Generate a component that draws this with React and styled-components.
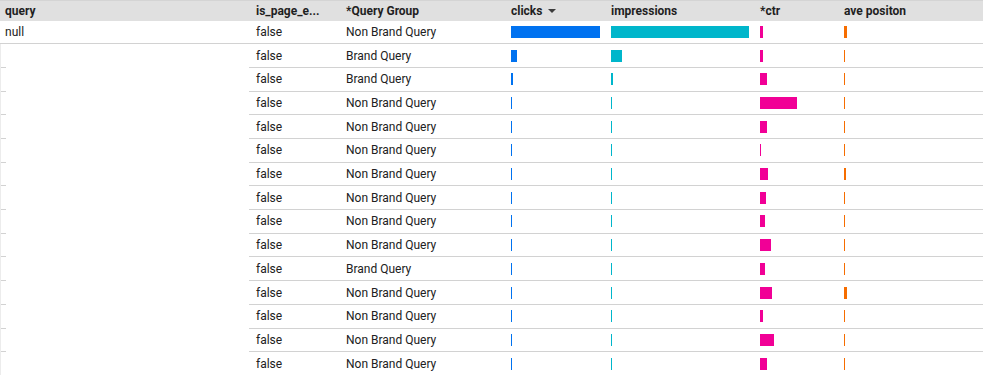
import styled, { createGlobalStyle } from "styled-components"

const rows = [
    { query: 'null', group: 'Non Brand Query', clicks: 89, impressions: 138, ctr: 3, pos: 3 },
    { query: '', group: 'Brand Query', clicks: 6, impressions: 11, ctr: 3, pos: 1 },
    { query: '', group: 'Brand Query', clicks: 2, impressions: 2, ctr: 7, pos: 1 },
    { query: '', group: 'Non Brand Query', clicks: 1, impressions: 1, ctr: 37, pos: 1 },
    { query: '', group: 'Non Brand Query', clicks: 1, impressions: 1, ctr: 7, pos: 1 },
    { query: '', group: 'Non Brand Query', clicks: 1, impressions: 1, ctr: 1, pos: 1 },
    { query: '', group: 'Non Brand Query', clicks: 1, impressions: 1, ctr: 8, pos: 2 },
    { query: '', group: 'Non Brand Query', clicks: 1, impressions: 1, ctr: 6, pos: 1 },
    { query: '', group: 'Non Brand Query', clicks: 1, impressions: 1, ctr: 5, pos: 1 },
    { query: '', group: 'Non Brand Query', clicks: 1, impressions: 1, ctr: 11, pos: 1 },
    { query: '', group: 'Brand Query', clicks: 1, impressions: 1, ctr: 5, pos: 1 },
    { query: '', group: 'Non Brand Query', clicks: 1, impressions: 1, ctr: 12, pos: 3 },
    { query: '', group: 'Non Brand Query', clicks: 1, impressions: 1, ctr: 3, pos: 1 },
    { query: '', group: 'Non Brand Query', clicks: 1, impressions: 1, ctr: 14, pos: 1 },
    { query: '', group: 'Non Brand Query', clicks: 1, impressions: 1, ctr: 7, pos: 1 },
]

const App = () => {
    return (
        <>
            <Global />
            <Table>
                <HeaderRow>
                    <HeadCell first>query</HeadCell>
                    <HeadCell>is_page_e...</HeadCell>
                    <HeadCell>*Query Group</HeadCell>
                    <HeadCell>
                        clicks
                        <SortArrow width='8' height='4' viewBox='0 0 8 4'>
                            <path d='M0 0 L8 0 L4 4 Z' fill='#3c3c3c' />
                        </SortArrow>
                    </HeadCell>
                    <HeadCell>impressions</HeadCell>
                    <HeadCell>*ctr</HeadCell>
                    <HeadCell>ave positon</HeadCell>
                </HeaderRow>
                {rows.map((r, i) => (
                    <Row key={i}>
                        <QueryCell masked={i > 0}>{r.query}</QueryCell>
                        <Cell>false</Cell>
                        <Cell>{r.group}</Cell>
                        <Cell><Bar color='#0072f0' style={{ width: r.clicks }} /></Cell>
                        <Cell><Bar color='#00b6cb' style={{ width: r.impressions }} /></Cell>
                        <Cell><Bar color='#f10096' style={{ width: r.ctr }} /></Cell>
                        <Cell><Bar color='#f66d00' style={{ width: r.pos }} /></Cell>
                    </Row>
                ))}
            </Table>
        </>
    )
}

export default App

const Global = createGlobalStyle`
    body {
        margin: 0;
        background: #fff;
        font-family: Roboto, "Liberation Sans", sans-serif;
        overflow: hidden;
    }
`
const Table = styled.div`
    width: 983px;
    height: 375px;
    overflow: hidden;
    font-size: 12px;
    color: #212121;
`
const columns = '249px 90px 165px 100px 149px 84px 1fr'

const HeaderRow = styled.div`
    display: grid;
    grid-template-columns: ${columns};
    height: 20.6px;
    background: #e0e0e0;
    border-top: 1px solid #d4d4d4;
    box-sizing: border-box;
`
const HeadCell = styled.div`
    display: flex;
    align-items: center;
    gap: 6px;
    padding-left: ${p => p.first ? '5px' : '7px'};
    font-weight: 700;
    color: #1f1f1f;
    white-space: nowrap;
`
const SortArrow = styled.svg`
    display: block;
    margin-top: 1px;
`
const Row = styled.div`
    display: grid;
    grid-template-columns: ${columns};
    height: 23.7px;
`
const Cell = styled.div`
    display: flex;
    align-items: center;
    padding-left: 7px;
    border-bottom: 1px solid #d2d2d2;
    white-space: nowrap;
`
const QueryCell = styled(Cell)`
    padding-left: 5px;
    ${p => p.masked && `
        border-bottom: none;
        border-left: 1px solid #ececec;
        background-image: linear-gradient(#d2d2d2, #d2d2d2);
        background-size: 5px 1px;
        background-position: left bottom;
        background-repeat: no-repeat;
    `}
`
const Bar = styled.div`
    height: 12px;
    background: ${p => p.color};
`
